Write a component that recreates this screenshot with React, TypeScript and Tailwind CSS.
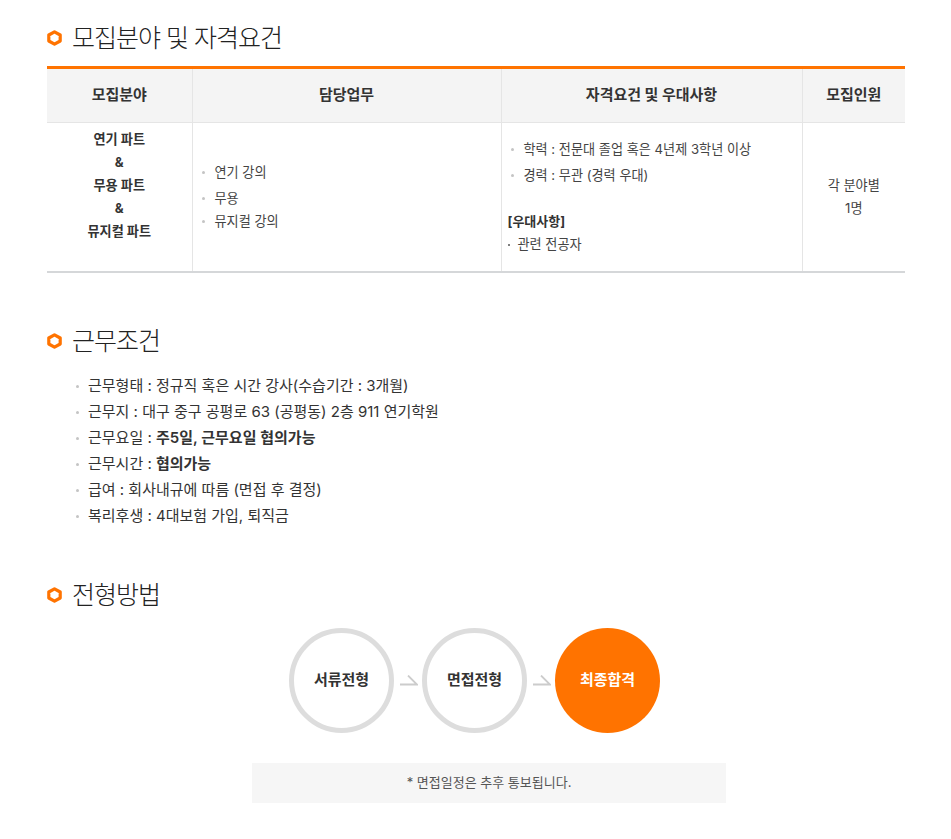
const font = "font-['Inter','Noto_Sans_CJK_KR',sans-serif]";

const SectionTitle = ({ title, className }: { title: string; className: string }) => (
  <h2 className={`flex items-center gap-[10px] text-[25px] leading-[36px] font-light tracking-[-1px] text-[#222] ${className}`}>
    <svg width="15" height="16" viewBox="0 0 15 16" className="shrink-0">
      <path d="M7.5 1.8 L13.2 5 L13.2 11 L7.5 14.2 L1.8 11 L1.8 5 Z" fill="none" stroke="#ff7300" strokeWidth="3.2" strokeLinejoin="round" />
    </svg>
    {title}
  </h2>
);

const Dot = ({ className = '' }: { className?: string }) => (
  <span className={`inline-block w-[3px] h-[3px] bg-[#c4c4c4] rounded-full shrink-0 ${className}`} />
);

const TableItem = ({ text, className = '' }: { text: string; className?: string }) => (
  <div className={`flex items-center h-[21px] text-[13.15px] text-[#444] ${className}`}>
    <Dot className="mr-[10px]" />
    {text}
  </div>
);

const conditions = [
  { label: '근무형태 : 정규직 혹은 시간 강사(수습기간 : 3개월)' },
  { label: '근무지 : 대구 중구 공평로 63 (공평동) 2층 911 연기학원' },
  { label: '근무요일 : ', bold: '주5일, 근무요일 협의가능' },
  { label: '근무시간 : ', bold: '협의가능' },
  { label: '급여 : 회사내규에 따름 (면접 후 결정)' },
  { label: '복리후생 : 4대보험 가입, 퇴직금' },
];

const Arrow = () => (
  <svg width="18" height="12" viewBox="0 0 18 12" className="ml-[6px] mr-[4px] shrink-0">
    <path d="M0 9.5 H17 L8 0.5" fill="none" stroke="#ccc" strokeWidth="1.8" />
  </svg>
);

const Step = ({ label }: { label: string }) => (
  <div className="flex items-center justify-center w-[105px] h-[105px] rounded-full border-[5px] border-[#ddd] text-[15px] font-bold text-[#333]">
    {label}
  </div>
);

export default function App() {
  return (
    <div className={`${font} w-[951px] h-[839px] bg-white pl-[47px] pr-[46px] pt-[20px]`}>
      <SectionTitle title="모집분야 및 자격요건" className="" />

      <table className="w-[858px] mt-[10px] table-fixed border-collapse border-t-[3px] border-t-[#ff7300] border-b-2 border-b-[#d5d7d9]">
        <colgroup>
          <col className="w-[145px]" />
          <col className="w-[309px]" />
          <col className="w-[301px]" />
          <col className="w-[103px]" />
        </colgroup>
        <thead>
          <tr className="h-[55px] bg-[#f4f4f4] border-b border-[#e5e5e5] text-[15px] text-[#333]">
            <th className="font-bold">모집분야</th>
            <th className="font-bold border-l border-[#e5e5e5]">담당업무</th>
            <th className="font-bold border-l border-[#e5e5e5]">자격요건 및 우대사항</th>
            <th className="font-bold border-l border-[#e5e5e5]">모집인원</th>
          </tr>
        </thead>
        <tbody>
          <tr className="h-[148px]">
            <td className="align-top text-center text-[13.15px] font-bold leading-[23px] text-[#333] pb-[28px] pt-[5px]">
              <div>연기 파트</div>
              <div>&amp;</div>
              <div>무용 파트</div>
              <div>&amp;</div>
              <div>뮤지컬 파트</div>
            </td>
            <td className="border-l border-[#e5e5e5] pl-[9px] align-top pt-[39px]">
              <TableItem text="연기 강의" />
              <TableItem text="무용" className="mt-[5px]" />
              <TableItem text="뮤지컬 강의" className="mt-[2px]" />
            </td>
            <td className="border-l border-[#e5e5e5] pl-[6px] align-top pt-[16px]">
              <TableItem text="학력 : 전문대 졸업 혹은 4년제 3학년 이상" className="pl-[3px]" />
              <TableItem text="경력 : 무관 (경력 우대)" className="pl-[3px] mt-[5px]" />
              <div className="mt-[25px] h-[21px] text-[13px] font-bold leading-[21px] text-[#333]">[우대사항]</div>
              <div className="flex items-center h-[21px] mt-[2px] text-[13.15px] text-[#444]">
                <span className="inline-block w-[2px] h-[2px] bg-[#555] rounded-full mr-[8px]" />
                관련 전공자
              </div>
            </td>
            <td className="border-l border-[#e5e5e5] text-center text-[13.15px] leading-[23px] text-[#444]">
              <div className="-mt-[1px]">각 분야별</div>
              <div>1명</div>
            </td>
          </tr>
        </tbody>
      </table>

      <SectionTitle title="근무조건" className="mt-[50px]" />

      <ul className="mt-[14px] pl-[29px]">
        {conditions.map((item) => (
          <li key={item.label} className="flex items-center h-[26px] text-[15px] text-[#333]">
            <Dot className="mr-[9px]" />
            <span className="whitespace-pre">
              {item.label}
              {item.bold && <b className="font-semibold">{item.bold}</b>}
            </span>
          </li>
        ))}
      </ul>

      <SectionTitle title="전형방법" className="mt-[48px]" />

      <div className="flex items-center mt-[15px] pl-[242px]">
        <Step label="서류전형" />
        <Arrow />
        <Step label="면접전형" />
        <Arrow />
        <div className="flex items-center justify-center w-[105px] h-[105px] rounded-full bg-[#ff7300] text-[15px] font-bold text-white">
          최종합격
        </div>
      </div>

      <div className="flex items-center justify-center w-[474px] h-[40px] ml-[205px] mt-[30px] bg-[#f6f6f6] text-[13px] text-[#555]">
        * 면접일정은 추후 통보됩니다.
      </div>
    </div>
  );
}
